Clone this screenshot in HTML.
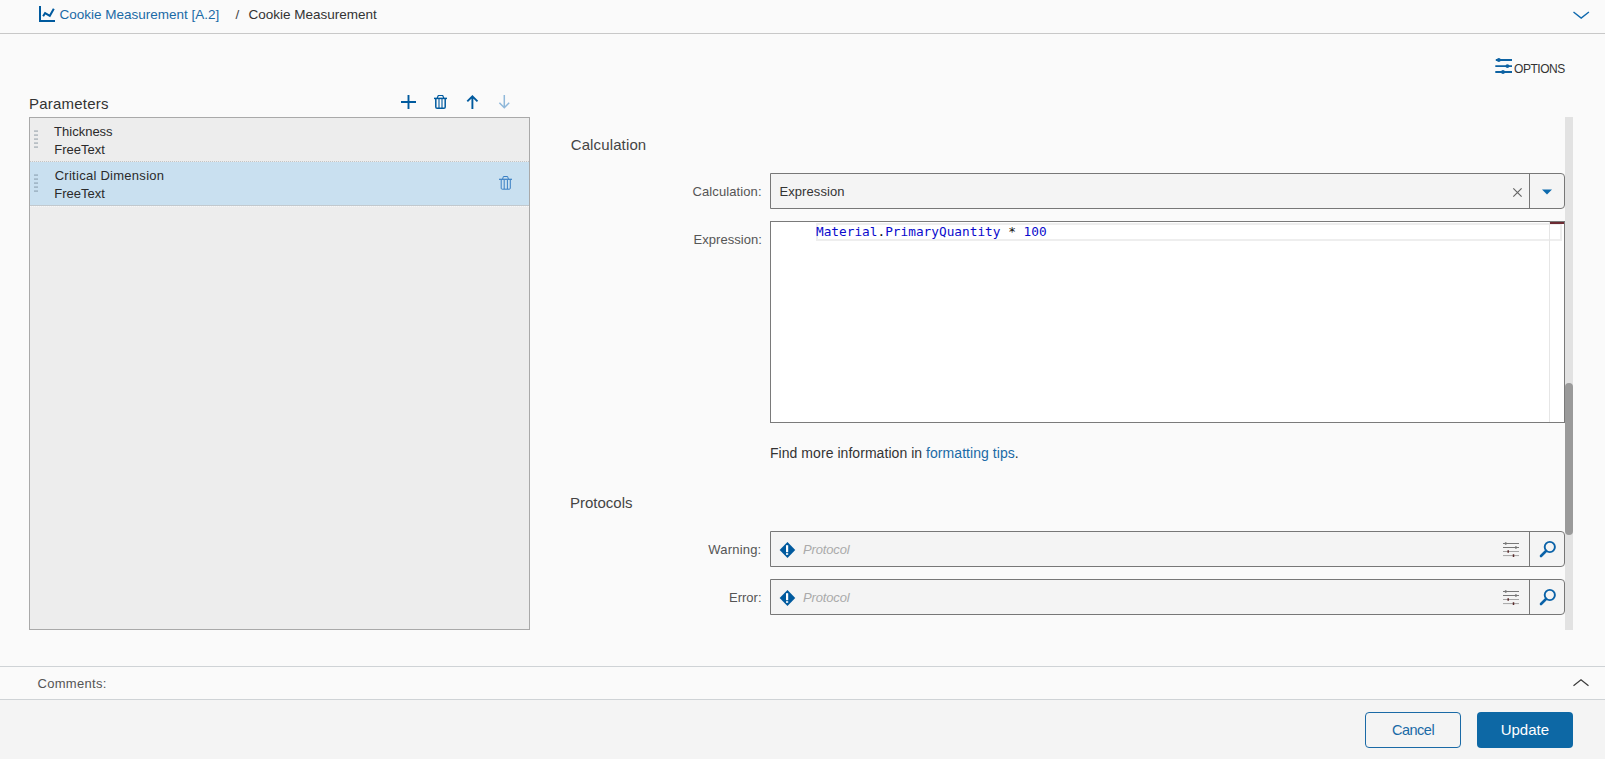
<!DOCTYPE html>
<html lang="en">
<head>
<meta charset="utf-8">
<title>Cookie Measurement</title>
<style>
*{box-sizing:border-box;margin:0;padding:0}
html,body{width:1605px;height:759px;overflow:hidden;background:#fafafa}
body{font-family:"Liberation Sans",sans-serif;font-size:13px;color:#333;position:relative}
.abs{position:absolute;white-space:nowrap}
.t{position:absolute;white-space:nowrap;line-height:1;transform-origin:0 0}
svg{position:absolute;overflow:visible}
.blue{color:#1a6aa6}
#topline{left:0;top:33px;width:1605px;height:1px;background:#c8c8c8}
#list{left:29px;top:117px;width:501px;height:513px;border:1px solid #a9a9a9;background:#ededed}
#row2{left:30px;top:162px;width:499px;height:44px;background:#c9e0f0;border-bottom:1px solid #c2c9ce}
#row2b{left:30px;top:206px;width:499px;height:0;border-top:1px dotted #f8f8f8}
#rowsep{left:30px;top:161px;width:499px;height:0;border-top:1px dotted #c4c4c4}
.field{border:1px solid #777;background:#f4f4f4;border-radius:0 4px 4px 0}
#sel{left:770px;top:173px;width:795px;height:36px}
#selbtn{left:1529px;top:173px;width:1px;height:36px;background:#777}
#ta{left:770px;top:221px;width:795px;height:202px;border:1px solid #7a7a7a;background:#fff}
#curline{left:816px;top:223px;width:746px;height:18px;border:2px solid #eee}
#ruler{left:1549px;top:222px;width:1px;height:200px;background:#e6e6e6}
#rulemark{left:1550px;top:222px;width:14px;height:2px;background:#6d2b33}
#w{left:770px;top:531px;width:795px;height:36px}
#wbtn{left:1529px;top:531px;width:1px;height:36px;background:#777}
#e{left:770px;top:579px;width:795px;height:36px}
#ebtn{left:1529px;top:579px;width:1px;height:36px;background:#777}
#track{left:1565px;top:117px;width:8px;height:513px;background:#e2e2e2}
#thumb{left:1565px;top:383px;width:8px;height:152px;background:#9a9a9a;border-radius:4px}
#cline1{left:0;top:666px;width:1605px;height:1px;background:#cfd3d6}
#cline2{left:0;top:699px;width:1605px;height:1px;background:#cfd3d6}
#footer{left:0;top:700px;width:1605px;height:59px;background:#f4f4f4}
#cancel{left:1365px;top:712px;width:96px;height:36px;border:1px solid #1a6aa6;border-radius:4px;background:#f4f4f4}
#update{left:1477px;top:712px;width:96px;height:36px;border-radius:4px;background:#0d68a5}
.code .k{color:#111}
.code{white-space:pre;font-family:"DejaVu Sans Mono","Liberation Mono",monospace;color:#0a0acd}
</style>
</head>
<body>
<!-- top breadcrumb bar -->
<div class="abs" id="topline"></div>
<div class="t blue" id="bc1" style="left:59.5px;top:7.5px;font-size:13.5px">Cookie Measurement [A.2]</div>
<div class="t" id="bcs" style="left:235.6px;top:7.5px;font-size:13.5px;color:#444">/</div>
<div class="t" id="bc2" style="left:248.5px;top:7.5px;font-size:13.5px;color:#333">Cookie Measurement</div>

<!-- options -->
<div class="t" id="opt" style="left:1514px;top:62.5px;font-size:12px;color:#333;letter-spacing:-0.45px">OPTIONS</div>

<!-- parameters panel -->
<div class="t" id="params" style="left:29px;top:95.6px;font-size:15px;color:#333;letter-spacing:0.22px">Parameters</div>

<div class="abs" id="list"></div>
<div class="abs" id="rowsep"></div>
<div class="abs" id="row2"></div>
<div class="abs" id="row2b"></div>
<div class="t" id="r1a" style="left:54.1px;top:125.4px;font-size:13px;color:#2b2b2b">Thickness</div>
<div class="t" id="r1b" style="left:54.2px;top:143.4px;font-size:13px;color:#2b2b2b">FreeText</div>
<div class="t" id="r2a" style="left:54.7px;top:169.4px;font-size:13px;color:#2b2b2b;letter-spacing:0.27px">Critical Dimension</div>
<div class="t" id="r2b" style="left:54.2px;top:187.4px;font-size:13px;color:#2b2b2b">FreeText</div>

<!-- calculation section -->
<div class="t" id="hcalc" style="left:570.7px;top:137px;font-size:15px;color:#444;letter-spacing:0.13px">Calculation</div>
<div class="t" id="lcalc" style="left:692.5px;top:185px;font-size:13px;color:#555;letter-spacing:0.1px">Calculation:</div>
<div class="abs field" id="sel"></div>
<div class="abs" id="selbtn"></div>
<div class="t" id="selv" style="left:779.5px;top:185px;font-size:13px;color:#333;letter-spacing:0.07px">Expression</div>

<div class="t" id="lexpr" style="left:693.5px;top:233.2px;font-size:13px;color:#555;letter-spacing:0.05px">Expression:</div>
<div class="abs" id="ta"></div>
<div class="abs" id="curline"></div>
<div class="abs" id="ruler"></div>
<div class="abs" id="rulemark"></div>
<div class="t code" id="code" style="left:816px;top:225.6px;font-size:12.77px">Material<span class="k">.</span>PrimaryQuantity <span class="k">*</span> 100</div>

<div class="t" id="tips" style="left:770px;top:446px;font-size:14px;color:#333;letter-spacing:0.05px">Find more information in <span class="blue">formatting tips</span>.</div>

<!-- protocols -->
<div class="t" id="hprot" style="left:570px;top:495px;font-size:15px;color:#444">Protocols</div>
<div class="t" id="lwarn" style="left:708.3px;top:543.2px;font-size:13px;color:#555;letter-spacing:0.2px">Warning:</div>
<div class="abs field" id="w"></div>
<div class="abs" id="wbtn"></div>
<div class="t" id="lerr" style="left:729px;top:591px;font-size:13px;color:#555">Error:</div>
<div class="abs field" id="e"></div>
<div class="abs" id="ebtn"></div>
<div class="t" id="pw" style="left:803px;top:543.2px;font-size:13px;color:#aaa;font-style:italic;letter-spacing:-0.15px">Protocol</div>
<div class="t" id="pe" style="left:803px;top:591.2px;font-size:13px;color:#aaa;font-style:italic;letter-spacing:-0.15px">Protocol</div>

<!-- scrollbar -->
<div class="abs" id="track"></div>
<div class="abs" id="thumb"></div>

<!-- comments + footer -->
<div class="abs" id="cline1"></div>
<div class="t" id="comm" style="left:37.5px;top:676.7px;font-size:13px;color:#555;letter-spacing:0.3px">Comments:</div>
<div class="abs" id="cline2"></div>
<div class="abs" id="footer"></div>
<div class="abs" id="cancel"></div>
<div class="abs" id="update"></div>
<div class="t blue" id="tcancel" style="left:1392px;top:722.5px;font-size:14.5px;letter-spacing:-0.5px">Cancel</div>
<div class="t" id="tupdate" style="left:1500.7px;top:722px;font-size:15px;color:#fff">Update</div>
<svg id="icons" style="left:0;top:0;pointer-events:none" width="1605" height="759" viewBox="0 0 1605 759">
<!-- breadcrumb chart icon -->
<g fill="none" stroke="#005a9e" stroke-width="2">
<path d="M40 6v15h15"/>
<path d="M43.1 16.2L45.1 13.1L49.8 15.8L53.8 8.7" stroke-linejoin="miter"/>
</g>
<!-- top chevron -->
<path d="M1573.5 12L1581.2 18.1L1588.9 12" fill="none" stroke="#0f69ae" stroke-width="1.4"/>
<!-- options icon -->
<g stroke="#0d62a3" stroke-width="1.9" fill="#0d62a3">
<path d="M1495.8 60h16.2M1495.3 66.1h16.7M1495.3 72h16.7"/>
<circle cx="1498.8" cy="60" r="1.9" stroke="none"/><circle cx="1507.4" cy="66.1" r="1.9" stroke="none"/><circle cx="1503" cy="72" r="1.9" stroke="none"/>
</g>
<!-- toolbar: plus, trash, up, down -->
<path d="M401 102h15M408.5 95v14" stroke="#005a9e" stroke-width="1.9" fill="none"/>
<g fill="none" stroke="#005a9e">
<path d="M434 98.4h13" stroke-width="1.5"/>
<path d="M437.2 98l1.1-2.5h4.4l1.1 2.5" stroke-width="1.2"/>
<path d="M435.8 98.5v8.4q0 1.3 1.3 1.3h6.8q1.3 0 1.3-1.3v-8.4" stroke-width="1.5"/>
<path d="M439 99v9M442 99v9" stroke-width="1.1"/>
</g>
<path d="M472.4 109v-12.5M467.3 101.4l5.1-5.1 5.1 5.1" stroke="#005a9e" stroke-width="1.9" fill="none"/>
<path d="M504.3 95v12.6M499.4 102.8l4.9 4.9 4.9-4.9" stroke="#8fb8da" stroke-width="1.5" fill="none"/>
<!-- drag handles -->
<path d="M34 131.1h4M34 135.1h4M34 139.1h4M34 143.1h4M34 147.1h4" stroke="#b8bfc4" stroke-width="1.8"/>
<path d="M34 175.1h4M34 179.1h4M34 183.1h4M34 187.1h4M34 191.1h4" stroke="#a2b8c8" stroke-width="1.8"/>
<!-- row trash -->
<g fill="none" stroke="#3a7fc4" stroke-width="1">
<path d="M499 179.3h13" stroke-width="1.2"/>
<path d="M502.6 179l.8-2.5h4.2l.8 2.5"/>
<path d="M501.2 179.5v8.7q0 1 1 1h7.1q1 0 1-1v-8.7"/>
<path d="M504.2 180v9M507.4 180v9"/>
</g>
<!-- select clear X and caret -->
<path d="M1513.3 188.3l8.3 8.3M1521.6 188.3l-8.3 8.3" stroke="#666" stroke-width="1.2" fill="none"/>
<path d="M1542 189.4h10l-5 5z" fill="#0d6aad"/>
<!-- diamonds -->
<g id="dia">
<path d="M787.45 541.9l7.8 8.1-7.8 8.1-7.8-8.1z" fill="#005a9e"/>
<path d="M787.1 545.2v7" stroke="#fff" stroke-width="2.2" fill="none"/><rect x="786" y="553.2" width="2.2" height="1.6" fill="#fff"/>
</g>
<g>
<path d="M787.45 589.9l7.8 8.1-7.8 8.1-7.8-8.1z" fill="#005a9e"/>
<path d="M787.1 593.2v7" stroke="#fff" stroke-width="2.2" fill="none"/><rect x="786" y="601.2" width="2.2" height="1.6" fill="#fff"/>
</g>
<!-- sliders + magnifier (warning) -->
<g id="sl1">
<path d="M1503 543.5h16M1503 547.5h16" stroke="#777" stroke-width="1" fill="none"/>
<path d="M1503 551.5h16M1503 555.6h16" stroke="#a5a5a5" stroke-width="1" fill="none"/>
<path d="M1505.7 542.2v2.6M1515.9 546.2v2.6" stroke="#777" stroke-width="1.6"/>
<path d="M1508.2 550.2v2.6M1513.5 554.3v2.6" stroke="#5a2a2a" stroke-width="1.5"/>
<circle cx="1549.8" cy="547" r="5.1" fill="none" stroke="#0a62a8" stroke-width="1.9"/>
<path d="M1546 551l-5 5" stroke="#0a62a8" stroke-width="2.6" stroke-linecap="round"/>
</g>
<g transform="translate(0 48)">
<path d="M1503 543.5h16M1503 547.5h16" stroke="#777" stroke-width="1" fill="none"/>
<path d="M1503 551.5h16M1503 555.6h16" stroke="#a5a5a5" stroke-width="1" fill="none"/>
<path d="M1505.7 542.2v2.6M1515.9 546.2v2.6" stroke="#777" stroke-width="1.6"/>
<path d="M1508.2 550.2v2.6M1513.5 554.3v2.6" stroke="#5a2a2a" stroke-width="1.5"/>
<circle cx="1549.8" cy="547" r="5.1" fill="none" stroke="#0a62a8" stroke-width="1.9"/>
<path d="M1546 551l-5 5" stroke="#0a62a8" stroke-width="2.6" stroke-linecap="round"/>
</g>
<!-- comments chevron -->
<path d="M1573.5 685.7L1581 679.7L1588.5 685.7" fill="none" stroke="#3a3a3a" stroke-width="1.2"/>
</svg>
</body>
</html>
